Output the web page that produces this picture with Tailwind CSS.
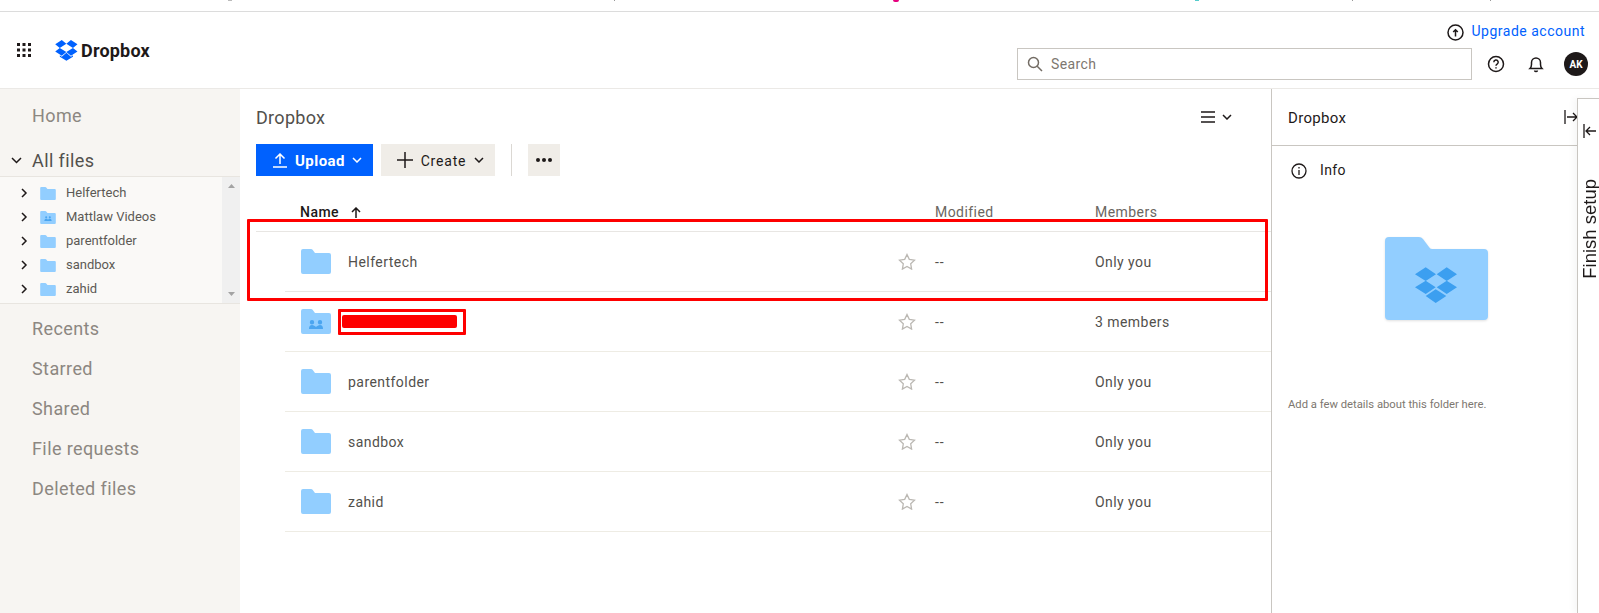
<!DOCTYPE html>
<html lang="en">
<head>
    <meta charset="UTF-8">
    <title>Dropbox</title>
    <script src="https://cdn.jsdelivr.net/npm/@tailwindcss/browser@4"></script>
</head>
<body class="relative h-[613px] w-[1599px] overflow-hidden bg-white font-['Roboto',sans-serif] text-[#52504c]">

    <!-- page above the capture, only a few pixels of it show -->
    <div class="relative h-[11px]">
        <span class="absolute left-[228px] top-0 h-px w-[4px] bg-[#bbb]"></span>
        <span class="absolute left-[614px] top-0 h-px w-px bg-[#999]"></span>
        <span class="absolute left-[893px] top-0 h-[2px] w-[6px] rounded-b-full bg-[#e6007e]"></span>
        <span class="absolute left-[1195px] top-0 h-px w-[4px] bg-[#5cc]"></span>
        <span class="absolute left-[1352px] top-0 h-px w-px bg-[#999]"></span>
        <span class="absolute left-[1490px] top-0 h-px w-px bg-[#999]"></span>
    </div>

    <header class="flex h-[78px] items-stretch justify-between border-y border-t-[#dcdcdc] border-b-[#ebe9e6]">
        <div class="flex items-center pl-[17px]">
            <svg width="14" height="14" viewBox="0 0 14 14" fill="#1e1919"><rect width="3" height="3"/><rect x="5.5" width="3" height="3"/><rect x="11" width="3" height="3"/><rect y="5.5" width="3" height="3"/><rect x="5.5" y="5.5" width="3" height="3"/><rect x="11" y="5.5" width="3" height="3"/><rect y="11" width="3" height="3"/><rect x="5.5" y="11" width="3" height="3"/><rect x="11" y="11" width="3" height="3"/></svg>
            <svg class="ml-[24px]" width="23" height="21" viewBox="0 0 43 40" fill="#0061fe"><path d="M12.5 0L0 8.1l8.7 7 12.5-7.8-8.7-7.3zM0 21.9l12.5 8.2 8.7-7.3-12.5-7.7-8.7 6.8zm21.2.9l8.8 7.3 12.4-8.1-8.6-6.9-12.6 7.7zm21.2-14.7L30 0l-8.8 7.3 12.6 7.8 8.6-7zM21.3 24.4l-8.8 7.3-3.7-2.5V32l12.5 7.5L33.8 32v-2.8l-3.8 2.5-8.7-7.3z"/></svg>
            <span class="ml-[3px] text-[18px] font-bold tracking-[0.2px] text-[#1e1919]">Dropbox</span>
        </div>
        <div class="flex flex-col items-end pr-[11px]">
            <div class="mr-[3px] flex h-[36px] items-center gap-[8px] pt-[2px]">
                <svg class="mt-[3px]" width="17" height="17" viewBox="0 0 17 17" fill="none" stroke="#1e1919" stroke-width="1.5"><circle cx="8.5" cy="8.5" r="7.5"/><path d="M8.5 12.5V6M6.2 8l2.3-2.3L10.8 8"/></svg>
                <a class="text-[14px] tracking-[0.5px] text-[#0061fe]">Upgrade account</a>
            </div>
            <div class="flex items-center">
                <div class="mr-[15px] flex h-[32px] w-[455px] items-center border border-[#c9c6c1] pl-[9px] text-[14px] tracking-[0.4px] text-[#7d7770]">
                    <svg width="16" height="16" viewBox="0 0 16 16" fill="none" stroke="#736c64" stroke-width="1.5"><circle cx="6.5" cy="6.5" r="5"/><path d="M10.2 10.2L15 15"/></svg>
                    <span class="ml-[8px]">Search</span>
                </div>
                <svg width="18" height="18" viewBox="0 0 18 18" fill="none" stroke="#1e1919" stroke-width="1.5"><circle cx="9" cy="9" r="7.5"/><path d="M6.8 7.2a2.2 2.2 0 1 1 3.3 1.9c-.7.4-1.1.8-1.1 1.6"/><path d="M9 12.2v1.4"/></svg>
                <svg class="ml-[22px]" width="18" height="18" viewBox="0 0 18 18" fill="none" stroke="#1e1919" stroke-width="1.5"><path d="M3 13.5c1-1 1.5-2 1.5-4V7.5a4.5 4.5 0 0 1 9 0v2c0 2 .5 3 1.5 4z"/><path d="M7.5 15.5a1.6 1.6 0 0 0 3 0"/></svg>
                <div class="ml-[19px] flex h-[24px] w-[24px] items-center justify-center rounded-full bg-[#1e1919] text-[10px] font-bold text-white">AK</div>
            </div>
        </div>
    </header>

    <div class="flex h-[524px]">
        <!-- left nav -->
        <aside class="w-[240px] shrink-0 bg-[#f7f5f2] text-[18px] tracking-[0.4px] text-[#8c8781]">
            <div class="flex h-[53px] items-center pb-[1px] pl-[32px]">Home</div>
            <div class="flex h-[34px] items-center pl-[11px] pt-[2px] text-[#52504c]">
                <svg width="11" height="7" viewBox="0 0 11 7" fill="none" stroke="#1e1919" stroke-width="1.5"><path d="M1 1l4.5 4.5L10 1"/></svg>
                <span class="ml-[10px]">All files</span>
            </div>
            <div class="flex h-[128px] border-y border-[#e8e5e0] bg-[#faf9f7] text-[13px] tracking-normal text-[#5c5955]">
                <ul class="w-[222px] pt-[4px]">
                    <li class="flex h-[24px] items-center pl-[21px]">
                        <svg width="7" height="10" viewBox="0 0 7 10" fill="none" stroke="#1e1919" stroke-width="1.5"><path d="M1 1l4 4-4 4"/></svg>
                        <svg class="ml-[12px]" width="16" height="13" viewBox="0 0 30 25" fill="#92ceff"><path d="M0 2a2 2 0 0 1 2-2h8a2 2 0 0 1 1.6.8L14 4h14a2 2 0 0 1 2 2v17a2 2 0 0 1-2 2H2a2 2 0 0 1-2-2z"/></svg>
                        <span class="ml-[10px]">Helfertech</span>
                    </li>
                    <li class="flex h-[24px] items-center pl-[21px]">
                        <svg width="7" height="10" viewBox="0 0 7 10" fill="none" stroke="#1e1919" stroke-width="1.5"><path d="M1 1l4 4-4 4"/></svg>
                        <svg class="ml-[12px]" width="16" height="13" viewBox="0 0 30 25" fill="#92ceff"><path d="M0 2a2 2 0 0 1 2-2h8a2 2 0 0 1 1.6.8L14 4h14a2 2 0 0 1 2 2v17a2 2 0 0 1-2 2H2a2 2 0 0 1-2-2z"/><path fill="#4aa5f0" d="M11.5 10a2 2 0 1 1 0 4 2 2 0 0 1 0-4zm7 0a2 2 0 1 1 0 4 2 2 0 0 1 0-4zM8 19c0-3 2-4 3.5-4s3 1 3.5 2c.5-1 2-2 3.5-2S22 16 22 19z"/></svg>
                        <span class="ml-[10px]">Mattlaw Videos</span>
                    </li>
                    <li class="flex h-[24px] items-center pl-[21px]">
                        <svg width="7" height="10" viewBox="0 0 7 10" fill="none" stroke="#1e1919" stroke-width="1.5"><path d="M1 1l4 4-4 4"/></svg>
                        <svg class="ml-[12px]" width="16" height="13" viewBox="0 0 30 25" fill="#92ceff"><path d="M0 2a2 2 0 0 1 2-2h8a2 2 0 0 1 1.6.8L14 4h14a2 2 0 0 1 2 2v17a2 2 0 0 1-2 2H2a2 2 0 0 1-2-2z"/></svg>
                        <span class="ml-[10px]">parentfolder</span>
                    </li>
                    <li class="flex h-[24px] items-center pl-[21px]">
                        <svg width="7" height="10" viewBox="0 0 7 10" fill="none" stroke="#1e1919" stroke-width="1.5"><path d="M1 1l4 4-4 4"/></svg>
                        <svg class="ml-[12px]" width="16" height="13" viewBox="0 0 30 25" fill="#92ceff"><path d="M0 2a2 2 0 0 1 2-2h8a2 2 0 0 1 1.6.8L14 4h14a2 2 0 0 1 2 2v17a2 2 0 0 1-2 2H2a2 2 0 0 1-2-2z"/></svg>
                        <span class="ml-[10px]">sandbox</span>
                    </li>
                    <li class="flex h-[24px] items-center pl-[21px]">
                        <svg width="7" height="10" viewBox="0 0 7 10" fill="none" stroke="#1e1919" stroke-width="1.5"><path d="M1 1l4 4-4 4"/></svg>
                        <svg class="ml-[12px]" width="16" height="13" viewBox="0 0 30 25" fill="#92ceff"><path d="M0 2a2 2 0 0 1 2-2h8a2 2 0 0 1 1.6.8L14 4h14a2 2 0 0 1 2 2v17a2 2 0 0 1-2 2H2a2 2 0 0 1-2-2z"/></svg>
                        <span class="ml-[10px]">zahid</span>
                    </li>
                </ul>
                <div class="flex w-[18px] flex-col items-center justify-between bg-[#f0f0f0] py-[7px]">
                    <svg width="7" height="4" viewBox="0 0 7 4" fill="#a3a3a3"><path d="M3.5 0L7 4H0z"/></svg>
                    <svg width="7" height="4" viewBox="0 0 7 4" fill="#a3a3a3"><path d="M0 0h7L3.5 4z"/></svg>
                </div>
            </div>
            <nav class="pt-[4px]">
                <div class="flex h-[40px] items-center pl-[32px]">Recents</div>
                <div class="flex h-[40px] items-center pl-[32px]">Starred</div>
                <div class="flex h-[40px] items-center pl-[32px]">Shared</div>
                <div class="flex h-[40px] items-center pl-[32px]">File requests</div>
                <div class="flex h-[40px] items-center pl-[32px]">Deleted files</div>
            </nav>
        </aside>

        <!-- file list -->
        <main class="w-[1031px] shrink-0 text-[14px] tracking-[0.45px]">
            <div class="flex h-[55px] items-center justify-between pl-[16px] pr-[39px]">
                <h1 class="pt-[2px] text-[18px] tracking-[0.3px] text-[#52504c]">Dropbox</h1>
                <div class="flex items-center gap-[7px]">
                    <svg width="14" height="12" viewBox="0 0 14 12" stroke="#1e1919" stroke-width="1.5"><path d="M0 1h14M0 6h14M0 11h14"/></svg>
                    <svg width="10" height="6" viewBox="0 0 10 6" fill="none" stroke="#1e1919" stroke-width="1.5"><path d="M1 1l4 4 4-4"/></svg>
                </div>
            </div>
            <div class="flex h-[32px] items-stretch pl-[16px]">
                <button class="flex w-[117px] items-center justify-center gap-[7px] bg-[#0061fe] pl-[5px] text-[15px] font-bold text-white">
                    <svg width="16" height="15" viewBox="0 0 16 15" fill="none" stroke="#fff" stroke-width="1.5"><path d="M8 11V1.5M3.5 5.5L8 1l4.5 4.5M1 14h14"/></svg>
                    <span class="pt-[2px]">Upload</span>
                    <svg width="10" height="6" viewBox="0 0 10 6" fill="none" stroke="#fff" stroke-width="1.5"><path d="M1 1l4 4 4-4"/></svg>
                </button>
                <button class="ml-[8px] flex w-[114px] items-center justify-center gap-[8px] bg-[#f0ede8] pl-[5px] tracking-[0.8px] text-[#1e1919]">
                    <svg width="16" height="16" viewBox="0 0 16 16" stroke="#1e1919" stroke-width="1.5"><path d="M8 0v16M0 8h16"/></svg>
                    <span class="pt-[2px]">Create</span>
                    <svg width="10" height="6" viewBox="0 0 10 6" fill="none" stroke="#1e1919" stroke-width="1.5"><path d="M1 1l4 4 4-4"/></svg>
                </button>
                <div class="ml-[16px] w-px bg-[#dbd8d3]"></div>
                <button class="ml-[16px] flex w-[32px] items-center justify-center gap-[2px] bg-[#f0ede8]">
                    <span class="h-[4px] w-[4px] rounded-full bg-[#1e1919]"></span>
                    <span class="h-[4px] w-[4px] rounded-full bg-[#1e1919]"></span>
                    <span class="h-[4px] w-[4px] rounded-full bg-[#1e1919]"></span>
                </button>
            </div>
            <div class="ml-[16px] flex h-[56px] items-end border-b border-[#e8e6e3] pb-[8px] pl-[44px]">
                <div class="flex w-[635px] items-center gap-[12px] font-medium text-[#1e1919]">Name
                    <svg width="10" height="11" viewBox="0 0 10 11" fill="none" stroke="#1e1919" stroke-width="1.5"><path d="M5 11V1M1 5l4-4 4 4"/></svg>
                </div>
                <div class="w-[160px] text-[#6b6661]">Modified</div>
                <div class="text-[#6b6661]">Members</div>
            </div>

            <div class="ml-[45px] flex h-[60px] items-center border-b border-[#e8e6e3] pl-[16px]">
                <svg class="w-[30px]" width="30" height="25" viewBox="0 0 30 25" fill="#92ceff"><path d="M0 2a2 2 0 0 1 2-2h8a2 2 0 0 1 1.6.8L14 4h14a2 2 0 0 1 2 2v17a2 2 0 0 1-2 2H2a2 2 0 0 1-2-2z"/></svg>
                <span class="ml-[17px] w-[550px] pt-[2px]">Helfertech</span>
                <svg width="18" height="17" viewBox="0 0 18 17" fill="none" stroke="#bbb8b3" stroke-width="1.3"><path d="M9 1.5l2.3 4.9 5.2.7-3.8 3.7.9 5.3L9 13.5l-4.6 2.6.9-5.3L1.5 7.1l5.200-.7z"/></svg>
                <span class="ml-[19px] w-[160px] pt-[2px] tracking-[1px]">--</span>
                <span class="pt-[2px]">Only you</span>
            </div>
            <div class="ml-[45px] flex h-[60px] items-center border-b border-[#eeece4] pl-[16px]">
                <svg class="w-[30px]" width="30" height="25" viewBox="0 0 30 25" fill="#92ceff"><path d="M0 2a2 2 0 0 1 2-2h8a2 2 0 0 1 1.6.8L14 4h14a2 2 0 0 1 2 2v17a2 2 0 0 1-2 2H2a2 2 0 0 1-2-2z"/><path fill="#4aa5f0" d="M11 11a2.2 2.2 0 1 1 0 4.4 2.2 2.2 0 0 1 0-4.4zm8 0a2.2 2.2 0 1 1 0 4.4 2.2 2.2 0 0 1 0-4.4zM8 20c0-2.5 1-4 3-4 1.5 0 3 1 4 2 1-1 2.5-2 4-2 2 0 3 1.5 3 4z"/></svg>
                <span class="ml-[17px] w-[550px] pt-[2px]"></span>
                <svg width="18" height="17" viewBox="0 0 18 17" fill="none" stroke="#bbb8b3" stroke-width="1.3"><path d="M9 1.5l2.3 4.9 5.2.7-3.8 3.7.9 5.3L9 13.5l-4.6 2.6.9-5.3L1.5 7.1l5.200-.7z"/></svg>
                <span class="ml-[19px] w-[160px] pt-[2px] tracking-[1px]">--</span>
                <span class="pt-[2px]">3 members</span>
            </div>
            <div class="ml-[45px] flex h-[60px] items-center border-b border-[#eeece4] pl-[16px]">
                <svg class="w-[30px]" width="30" height="25" viewBox="0 0 30 25" fill="#92ceff"><path d="M0 2a2 2 0 0 1 2-2h8a2 2 0 0 1 1.6.8L14 4h14a2 2 0 0 1 2 2v17a2 2 0 0 1-2 2H2a2 2 0 0 1-2-2z"/></svg>
                <span class="ml-[17px] w-[550px] pt-[2px]">parentfolder</span>
                <svg width="18" height="17" viewBox="0 0 18 17" fill="none" stroke="#bbb8b3" stroke-width="1.3"><path d="M9 1.5l2.3 4.9 5.2.7-3.8 3.7.9 5.3L9 13.5l-4.6 2.6.9-5.3L1.5 7.1l5.200-.7z"/></svg>
                <span class="ml-[19px] w-[160px] pt-[2px] tracking-[1px]">--</span>
                <span class="pt-[2px]">Only you</span>
            </div>
            <div class="ml-[45px] flex h-[60px] items-center border-b border-[#eeece4] pl-[16px]">
                <svg class="w-[30px]" width="30" height="25" viewBox="0 0 30 25" fill="#92ceff"><path d="M0 2a2 2 0 0 1 2-2h8a2 2 0 0 1 1.6.8L14 4h14a2 2 0 0 1 2 2v17a2 2 0 0 1-2 2H2a2 2 0 0 1-2-2z"/></svg>
                <span class="ml-[17px] w-[550px] pt-[2px]">sandbox</span>
                <svg width="18" height="17" viewBox="0 0 18 17" fill="none" stroke="#bbb8b3" stroke-width="1.3"><path d="M9 1.5l2.3 4.9 5.2.7-3.8 3.7.9 5.3L9 13.5l-4.6 2.6.9-5.3L1.5 7.1l5.200-.7z"/></svg>
                <span class="ml-[19px] w-[160px] pt-[2px] tracking-[1px]">--</span>
                <span class="pt-[2px]">Only you</span>
            </div>
            <div class="ml-[45px] flex h-[60px] items-center border-b border-[#eeece4] pl-[16px]">
                <svg class="w-[30px]" width="30" height="25" viewBox="0 0 30 25" fill="#92ceff"><path d="M0 2a2 2 0 0 1 2-2h8a2 2 0 0 1 1.6.8L14 4h14a2 2 0 0 1 2 2v17a2 2 0 0 1-2 2H2a2 2 0 0 1-2-2z"/></svg>
                <span class="ml-[17px] w-[550px] pt-[2px]">zahid</span>
                <svg width="18" height="17" viewBox="0 0 18 17" fill="none" stroke="#bbb8b3" stroke-width="1.3"><path d="M9 1.5l2.3 4.9 5.2.7-3.8 3.7.9 5.3L9 13.5l-4.6 2.6.9-5.3L1.5 7.1l5.200-.7z"/></svg>
                <span class="ml-[19px] w-[160px] pt-[2px] tracking-[1px]">--</span>
                <span class="pt-[2px]">Only you</span>
            </div>
        </main>

        <!-- info panel -->
        <section class="flex-1 border-l border-[#c9c6c1] text-[14px]">
            <div class="flex h-[57px] items-center justify-between border-b border-[#c9c6c1] pl-[16px] pr-[21px] text-[#1e1919]">
                <span class="pt-[2px] text-[15px] tracking-[0.3px]">Dropbox</span>
                <svg width="14" height="14" viewBox="0 0 14 14" fill="none" stroke="#1e1919" stroke-width="1.3"><path d="M1 0v14M3 7h10M9 3l4 4-4 4"/></svg>
            </div>
            <div class="flex h-[49px] items-center pl-[19px] tracking-[0.4px] text-[#1e1919]">
                <svg width="16" height="16" viewBox="0 0 16 16" fill="none" stroke="#1e1919" stroke-width="1.3"><circle cx="8" cy="8" r="7"/><path d="M8 7v5M8 4v1.5"/></svg>
                <span class="ml-[13px]">Info</span>
            </div>
            <svg class="ml-[113px] mt-[42px] drop-shadow-[0_1px_1px_rgba(0,0,0,0.12)]" width="103" height="83" viewBox="0 0 103 83">
                <path fill="#92ceff" d="M0 4a4 4 0 0 1 4-4h30a5 5 0 0 1 4 2l6 8a4 4 0 0 0 3 2h52a4 4 0 0 1 4 4v63a4 4 0 0 1-4 4H4a4 4 0 0 1-4-4z"/>
                <path fill="#3c9ff0" d="M30 37.3L40.7 30.3 51 37.3 40.7 44zM51.7 37.3L61.7 30.3 72 37.3 61.7 44zM30 50.3L40.7 43.7 50.7 50.3 40.7 57zM51.7 50.3L61.7 43.7 72 50.3 61.7 57zM40.7 59L50.7 52.3 61.3 59 50.7 66z"/>
            </svg>
            <p class="ml-[16px] mt-[77px] text-[11.25px] text-[#7d7770]">Add a few details about this folder here.</p>
        </section>
    </div>

    <!-- finish setup tab sits over the panel -->
    <div class="absolute bottom-0 right-0 top-[98px] flex w-[22px] flex-col items-center border-l border-t border-[#c9c6c1] bg-white pl-[2px] pt-[26px] shadow-[-4px_0_6px_rgba(0,0,0,0.03)]">
        <svg class="absolute left-[5px] top-[25px]" width="14" height="14" viewBox="0 0 14 14" fill="none" stroke="#1e1919" stroke-width="1.3"><path d="M1 0v14M13 7H3M7 3L3 7l4 4"/></svg>
        <span class="mt-[54px] rotate-180 font-['Liberation_Sans',sans-serif] text-[18.5px] leading-[20px] text-[#1e1919] [writing-mode:vertical-rl]">Finish setup</span>
    </div>

    <!-- red annotations drawn on the screenshot -->
    <div class="absolute left-[247px] top-[219px] h-[82px] w-[1021px] rounded-[1px] border-[3px] border-[#fe0000]"></div>
    <div class="absolute left-[338px] top-[309px] h-[26px] w-[128px] rounded-[1px] border-[3px] border-[#fe0000]"></div>
    <div class="absolute left-[342px] top-[315px] h-[13px] w-[115px] rounded-[2px] bg-[#fe0000]"></div>
</body>
</html>
